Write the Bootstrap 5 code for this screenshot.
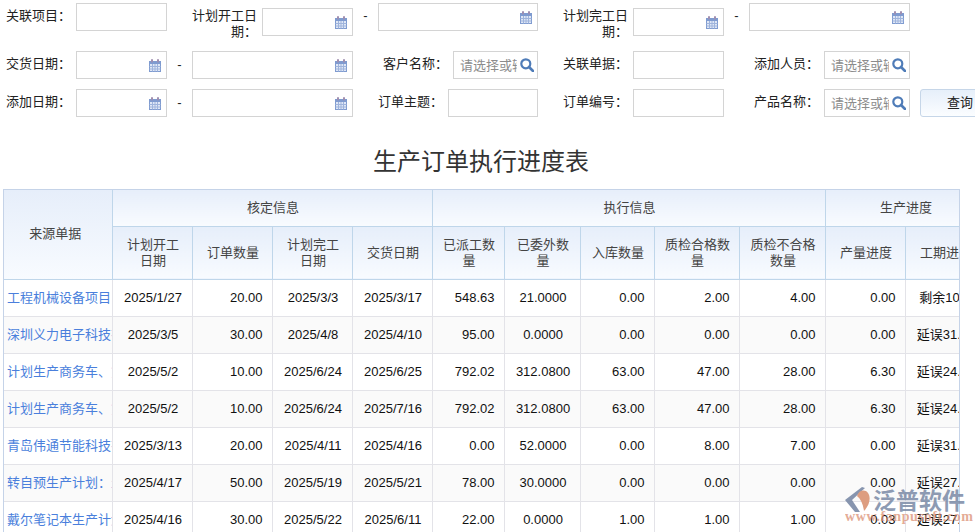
<!DOCTYPE html>
<html lang="zh-CN">
<head>
    <meta charset="UTF-8">
    <meta name="viewport" content="width=device-width, initial-scale=1.0">
    <title>生产订单执行进度表</title>
    <link href="https://cdn.jsdelivr.net/npm/bootstrap@5.3.0/dist/css/bootstrap.min.css" rel="stylesheet">
    <style>
        html, body {
            height: 532px;
            overflow: hidden;
        }
        body {
            position: relative;
            background-color: #ffffff;
            color: #222222;
            font-family: "Liberation Sans", "Noto Sans CJK SC", sans-serif;
            font-size: 13px;
        }
        .search-form {
            width: 1010px;
            padding: 3px 0 0 6px;
        }
        .form-line {
            height: 38px;
        }
        .form-line-first {
            height: 43px;
        }
        .fld-name {
            flex: none;
            width: 65px;
            margin-right: 5px;
            padding-bottom: 2px;
            text-align: right;
            line-height: 16px;
            color: #222222;
        }
        .form-line-first .fld-name {
            padding-top: 5px;
            padding-bottom: 0;
        }
        .fld-box {
            position: relative;
            flex: none;
            height: 28px;
        }
        .form-line-first .fld-low {
            margin-top: 5px;
        }
        .fld-box .form-control {
            height: 28px;
            min-height: 0;
            padding: 0 20px 0 6px;
            border: 1px solid #d4d4d4;
            border-radius: 0;
            font-size: 13px;
        }
        .fld-box .form-control::placeholder {
            color: #8c8c8c;
            opacity: 1;
        }
        .w-91 { width: 91px; }
        .w-85 { width: 85px; }
        .w-86 { width: 86px; }
        .w-90 { width: 90px; }
        .w-160 { width: 160px; }
        .w-161 { width: 161px; }
        .fld-icon {
            position: absolute;
            top: 8px;
            right: 6px;
        }
        .fld-icon-search {
            top: 7px;
            right: 4px;
        }
        .dash-gap {
            flex: none;
            width: 25px;
            text-align: center;
            color: #222222;
        }
        .form-line-first .dash-gap {
            padding-top: 5px;
            line-height: 16px;
        }
        .gap-25 { margin-left: 25px; }
        .gap-30 { margin-left: 30px; }
        .gap-10 { margin-left: 10px; }
        .query-btn {
            flex: none;
            width: 80px;
            height: 28px;
            padding: 0;
            border: 1px solid #c6d6e8;
            border-radius: 3px;
            background: linear-gradient(#e6effa, #fbfdff);
            color: #222222;
            font-size: 13px;
        }
        .report-title {
            width: 956px;
            margin: 22px 0 9px 3px;
            font-size: 24px;
            font-weight: 400;
            line-height: 36px;
            text-align: center;
            color: #333333;
        }
        .report-wrap {
            width: 957px;
            margin-left: 3px;
            overflow: hidden;
            border: 1px solid #c5d3e8;
            border-bottom: 0;
        }
        .report-tbl {
            width: 981px;
            margin: 0;
            table-layout: fixed;
            border-collapse: collapse;
            font-size: 13px;
        }
        .report-tbl th, .report-tbl td {
            padding: 0 3px 0 5px;
            vertical-align: middle;
            white-space: nowrap;
            overflow: hidden;
        }
        .report-tbl th {
            height: 36px;
            padding: 0 8px 0 10px;
            border: 1px solid #bfd6ea;
            background-color: transparent;
            background-image: linear-gradient(#e6eefa, #f8fbff);
            color: #444444;
            font-weight: 400;
            line-height: 16px;
            text-align: center;
            white-space: normal;
        }
        .report-tbl thead tr:nth-child(2) th {
            height: 53px;
        }
        .report-tbl th.src-head {
            padding: 0 14px 0 9px;
        }
        .report-tbl td {
            height: 37px;
            border: 1px solid #e3e3e8;
            color: #111111;
            text-align: center;
        }
        .report-tbl tbody tr:nth-child(even) td {
            background-color: #fafafa;
        }
        .report-tbl tr > :first-child {
            border-left: 0;
        }
        .report-tbl tr:first-child th {
            border-top: 0;
        }
        .report-tbl td.num-cell {
            padding-right: 9px;
            text-align: right;
        }
        .report-tbl td.src-cell {
            padding-left: 3px;
            padding-right: 0;
            text-align: left;
        }
        .src-cell a {
            color: #4a7fdc;
            text-decoration: none;
        }
        .brand-mark {
            position: absolute;
            right: 8px;
            bottom: 0;
            width: 122px;
            height: 46px;
            pointer-events: none;
        }
        .brand-logo {
            position: absolute;
            left: 0;
            top: 1px;
        }
        .brand-name {
            position: absolute;
            left: 28px;
            top: 2px;
            color: #7a8aa6;
            font-size: 23px;
            font-weight: 700;
            line-height: 26px;
            white-space: nowrap;
            opacity: .85;
        }
        .brand-site {
            position: absolute;
            left: 0;
            top: 23px;
            color: #d98a6c;
            font-family: "Liberation Serif", serif;
            font-size: 14px;
            font-weight: 700;
            line-height: 16px;
            letter-spacing: .6px;
            white-space: nowrap;
            opacity: .7;
        }
    </style>
</head>
<body>
    <svg width="0" height="0" class="d-block">
        <defs>
            <symbol id="ico-cal" viewBox="0 0 12 13">
                <rect x="0.5" y="2.5" width="11" height="10" fill="#dfe7f6" stroke="#7f9bd0"/>
                <rect x="0" y="2" width="12" height="3" fill="#7f9bd0"/>
                <path d="M0.5 7.5H11.5M0.5 10H11.5M3.5 5V12.5M6 5V12.5M8.5 5V12.5" stroke="#9fb4dc" stroke-width="1" fill="none"/>
                <rect x="2" y="0" width="2" height="3.5" rx="1" fill="#a08fb0"/>
                <rect x="8" y="0" width="2" height="3.5" rx="1" fill="#a08fb0"/>
            </symbol>
            <symbol id="ico-find" viewBox="0 0 14 14">
                <circle cx="5.8" cy="5.8" r="4.5" fill="none" stroke="#4f7cb8" stroke-width="2.2"/>
                <path d="M9 9L13 13" stroke="#4f7cb8" stroke-width="2.6" stroke-linecap="round"/>
            </symbol>
        </defs>
    </svg>

    <form class="search-form">
        <div class="d-flex align-items-start form-line-first">
            <label class="fld-name">关联项目：</label>
            <div class="fld-box w-91"><input type="text" class="form-control"></div>
            <label class="fld-name gap-25">计划开工日期：</label>
            <div class="fld-box fld-low w-91"><input type="text" class="form-control"><svg class="fld-icon" width="12" height="13"><use href="#ico-cal"/></svg></div>
            <span class="dash-gap">-</span>
            <div class="fld-box w-160"><input type="text" class="form-control"><svg class="fld-icon" width="12" height="13"><use href="#ico-cal"/></svg></div>
            <label class="fld-name gap-25">计划完工日期：</label>
            <div class="fld-box fld-low w-91"><input type="text" class="form-control"><svg class="fld-icon" width="12" height="13"><use href="#ico-cal"/></svg></div>
            <span class="dash-gap">-</span>
            <div class="fld-box w-161"><input type="text" class="form-control"><svg class="fld-icon" width="12" height="13"><use href="#ico-cal"/></svg></div>
        </div>

        <div class="d-flex align-items-center form-line">
            <label class="fld-name">交货日期：</label>
            <div class="fld-box w-91"><input type="text" class="form-control"><svg class="fld-icon" width="12" height="13"><use href="#ico-cal"/></svg></div>
            <span class="dash-gap">-</span>
            <div class="fld-box w-161"><input type="text" class="form-control"><svg class="fld-icon" width="12" height="13"><use href="#ico-cal"/></svg></div>
            <label class="fld-name gap-30">客户名称：</label>
            <div class="fld-box w-85"><input type="text" class="form-control" placeholder="请选择或输入"><svg class="fld-icon fld-icon-search" width="14" height="14"><use href="#ico-find"/></svg></div>
            <label class="fld-name gap-25">关联单据：</label>
            <div class="fld-box w-91"><input type="text" class="form-control"></div>
            <label class="fld-name gap-30">添加人员：</label>
            <div class="fld-box w-86"><input type="text" class="form-control" placeholder="请选择或输入"><svg class="fld-icon fld-icon-search" width="14" height="14"><use href="#ico-find"/></svg></div>
        </div>

        <div class="d-flex align-items-center form-line">
            <label class="fld-name">添加日期：</label>
            <div class="fld-box w-91"><input type="text" class="form-control"><svg class="fld-icon" width="12" height="13"><use href="#ico-cal"/></svg></div>
            <span class="dash-gap">-</span>
            <div class="fld-box w-161"><input type="text" class="form-control"><svg class="fld-icon" width="12" height="13"><use href="#ico-cal"/></svg></div>
            <label class="fld-name gap-25">订单主题：</label>
            <div class="fld-box w-90"><input type="text" class="form-control"></div>
            <label class="fld-name gap-25">订单编号：</label>
            <div class="fld-box w-91"><input type="text" class="form-control"></div>
            <label class="fld-name gap-30">产品名称：</label>
            <div class="fld-box w-86"><input type="text" class="form-control" placeholder="请选择或输入"><svg class="fld-icon fld-icon-search" width="14" height="14"><use href="#ico-find"/></svg></div>
            <button type="button" class="query-btn gap-10">查询</button>
        </div>
    </form>

    <h1 class="report-title">生产订单执行进度表</h1>

    <div class="report-wrap">
        <table class="table report-tbl">
            <colgroup>
                <col style="width:108px"><col style="width:80px"><col style="width:80px"><col style="width:80px"><col style="width:80px">
                <col style="width:72px"><col style="width:76px"><col style="width:74px"><col style="width:85px"><col style="width:86px">
                <col style="width:80px"><col style="width:80px">
            </colgroup>
            <thead>
                <tr>
                    <th rowspan="2" class="src-head">来源单据</th>
                    <th colspan="4">核定信息</th>
                    <th colspan="5">执行信息</th>
                    <th colspan="2">生产进度</th>
                </tr>
                <tr>
                    <th>计划开工日期</th>
                    <th>订单数量</th>
                    <th>计划完工日期</th>
                    <th>交货日期</th>
                    <th>已派工数量</th>
                    <th>已委外数量</th>
                    <th>入库数量</th>
                    <th>质检合格数量</th>
                    <th>质检不合格数量</th>
                    <th>产量进度</th>
                    <th>工期进度</th>
                </tr>
            </thead>
            <tbody>
                <tr>
                    <td class="src-cell"><a href="#">工程机械设备项目：生产计划</a></td>
                    <td>2025/1/27</td><td class="num-cell">20.00</td><td>2025/3/3</td><td>2025/3/17</td>
                    <td class="num-cell">548.63</td><td>21.0000</td><td class="num-cell">0.00</td><td class="num-cell">2.00</td><td class="num-cell">4.00</td>
                    <td class="num-cell">0.00</td><td>剩余10天</td>
                </tr>
                <tr>
                    <td class="src-cell"><a href="#">深圳义力电子科技有限公司</a></td>
                    <td>2025/3/5</td><td class="num-cell">30.00</td><td>2025/4/8</td><td>2025/4/10</td>
                    <td class="num-cell">95.00</td><td>0.0000</td><td class="num-cell">0.00</td><td class="num-cell">0.00</td><td class="num-cell">0.00</td>
                    <td class="num-cell">0.00</td><td>延误31.00</td>
                </tr>
                <tr>
                    <td class="src-cell"><a href="#">计划生产商务车、货车</a></td>
                    <td>2025/5/2</td><td class="num-cell">10.00</td><td>2025/6/24</td><td>2025/6/25</td>
                    <td class="num-cell">792.02</td><td>312.0800</td><td class="num-cell">63.00</td><td class="num-cell">47.00</td><td class="num-cell">28.00</td>
                    <td class="num-cell">6.30</td><td>延误24.00</td>
                </tr>
                <tr>
                    <td class="src-cell"><a href="#">计划生产商务车、货车</a></td>
                    <td>2025/5/2</td><td class="num-cell">10.00</td><td>2025/6/24</td><td>2025/7/16</td>
                    <td class="num-cell">792.02</td><td>312.0800</td><td class="num-cell">63.00</td><td class="num-cell">47.00</td><td class="num-cell">28.00</td>
                    <td class="num-cell">6.30</td><td>延误24.00</td>
                </tr>
                <tr>
                    <td class="src-cell"><a href="#">青岛伟通节能科技有限公司</a></td>
                    <td>2025/3/13</td><td class="num-cell">20.00</td><td>2025/4/11</td><td>2025/4/16</td>
                    <td class="num-cell">0.00</td><td>52.0000</td><td class="num-cell">0.00</td><td class="num-cell">8.00</td><td class="num-cell">7.00</td>
                    <td class="num-cell">0.00</td><td>延误31.00</td>
                </tr>
                <tr>
                    <td class="src-cell"><a href="#">转自预生产计划：生产</a></td>
                    <td>2025/4/17</td><td class="num-cell">50.00</td><td>2025/5/19</td><td>2025/5/21</td>
                    <td class="num-cell">78.00</td><td>30.0000</td><td class="num-cell">0.00</td><td class="num-cell">0.00</td><td class="num-cell">0.00</td>
                    <td class="num-cell">0.00</td><td>延误27.00</td>
                </tr>
                <tr>
                    <td class="src-cell"><a href="#">戴尔笔记本生产计划单</a></td>
                    <td>2025/4/16</td><td class="num-cell">30.00</td><td>2025/5/22</td><td>2025/6/11</td>
                    <td class="num-cell">22.00</td><td>0.0000</td><td class="num-cell">1.00</td><td class="num-cell">1.00</td><td class="num-cell">1.00</td>
                    <td class="num-cell">0.03</td><td>延误27.00</td>
                </tr>
            </tbody>
        </table>
    </div>

    <div class="brand-mark">
        <svg class="brand-logo" width="27" height="26" viewBox="0 0 27 26">
            <path d="M17 0L0 13L10 25L15 25L7 13L20 1Z" fill="#7a8aa6" opacity=".9"/>
            <path d="M12 9C14 3 20 2 23 6C26 10 25 18 19 24C18 17 16 12 12 9Z" fill="#dd9d80"/>
        </svg>
        <span class="brand-name">泛普软件</span>
        <span class="brand-site">www.fanpusoft.com</span>
    </div>
</body>
</html>
